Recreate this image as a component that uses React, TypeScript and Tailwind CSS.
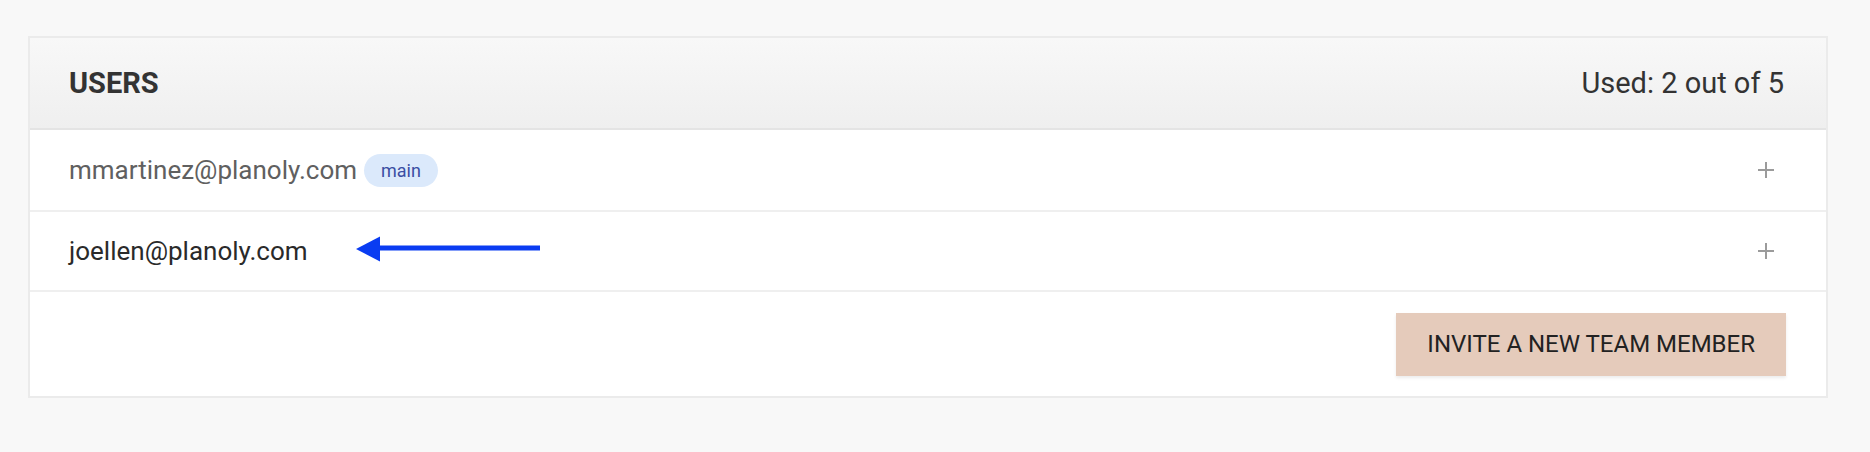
import React from 'react'

const users = [
  { email: 'mmartinez@planoly.com', main: true },
  { email: 'joellen@planoly.com', main: false },
]

function PlusIcon() {
  return (
    <svg width="16" height="16" viewBox="0 0 16 16" className="shrink-0">
      <path d="M8 0v16M0 8h16" stroke="#9b9b9b" strokeWidth="2" />
    </svg>
  )
}

function Arrow() {
  return (
    <svg
      width="184"
      height="26"
      viewBox="0 0 184 26"
      className="absolute left-[326px] top-[24px]"
    >
      <polygon points="0,13 24,0.5 24,25.5" fill="#0a3cf2" />
      <rect x="22" y="9.5" width="162" height="5" fill="#0a3cf2" />
    </svg>
  )
}

export default function App() {
  return (
    <div
      className="w-[1870px] h-[452px] bg-[#f8f8f8] pt-[36px] pl-[28px]"
      style={{ fontFamily: 'Roboto, "Liberation Sans", sans-serif' }}
    >
      <div className="w-[1800px] border-2 border-[#ebebeb] bg-white">
        {/* header */}
        <div className="h-[92px] flex items-center justify-between pl-[39px] pr-[42px] bg-gradient-to-b from-[#f8f8f8] to-[#efefef] border-b-2 border-[#e4e4e4]">
          <h2 className="text-[29px] font-bold text-[#333] leading-none">USERS</h2>
          <span className="text-[29px] text-[#333] leading-none">Used: 2 out of 5</span>
        </div>

        {/* users */}
        {users.map((u, i) => (
          <div
            key={u.email}
            className={`relative flex items-center justify-between pl-[39px] pr-[52px] border-b-2 border-[#efefef] ${
              i === 0 ? 'h-[82px]' : 'h-[80px]'
            }`}
          >
            <div className="flex items-center gap-[7px]">
              <span
                className={`text-[26px] leading-none ${
                  u.main ? 'text-[#606060]' : 'text-[#2a2a2a]'
                }`}
              >
                {u.email}
              </span>
              {u.main && (
                <span className="h-[33px] px-[17px] rounded-full bg-[#dbe9fb] text-[#3a4ea3] text-[18px] flex items-center">
                  main
                </span>
              )}
            </div>
            {!u.main && <Arrow />}
            <PlusIcon />
          </div>
        ))}

        {/* footer */}
        <div className="h-[104px] flex items-center justify-end pr-[40px]">
          <button className="h-[63px] px-[31px] bg-[#e5cbbb] text-[#222] text-[24px] shadow-[0_2px_3px_rgba(0,0,0,0.08)]">
            INVITE A NEW TEAM MEMBER
          </button>
        </div>
      </div>
    </div>
  )
}
